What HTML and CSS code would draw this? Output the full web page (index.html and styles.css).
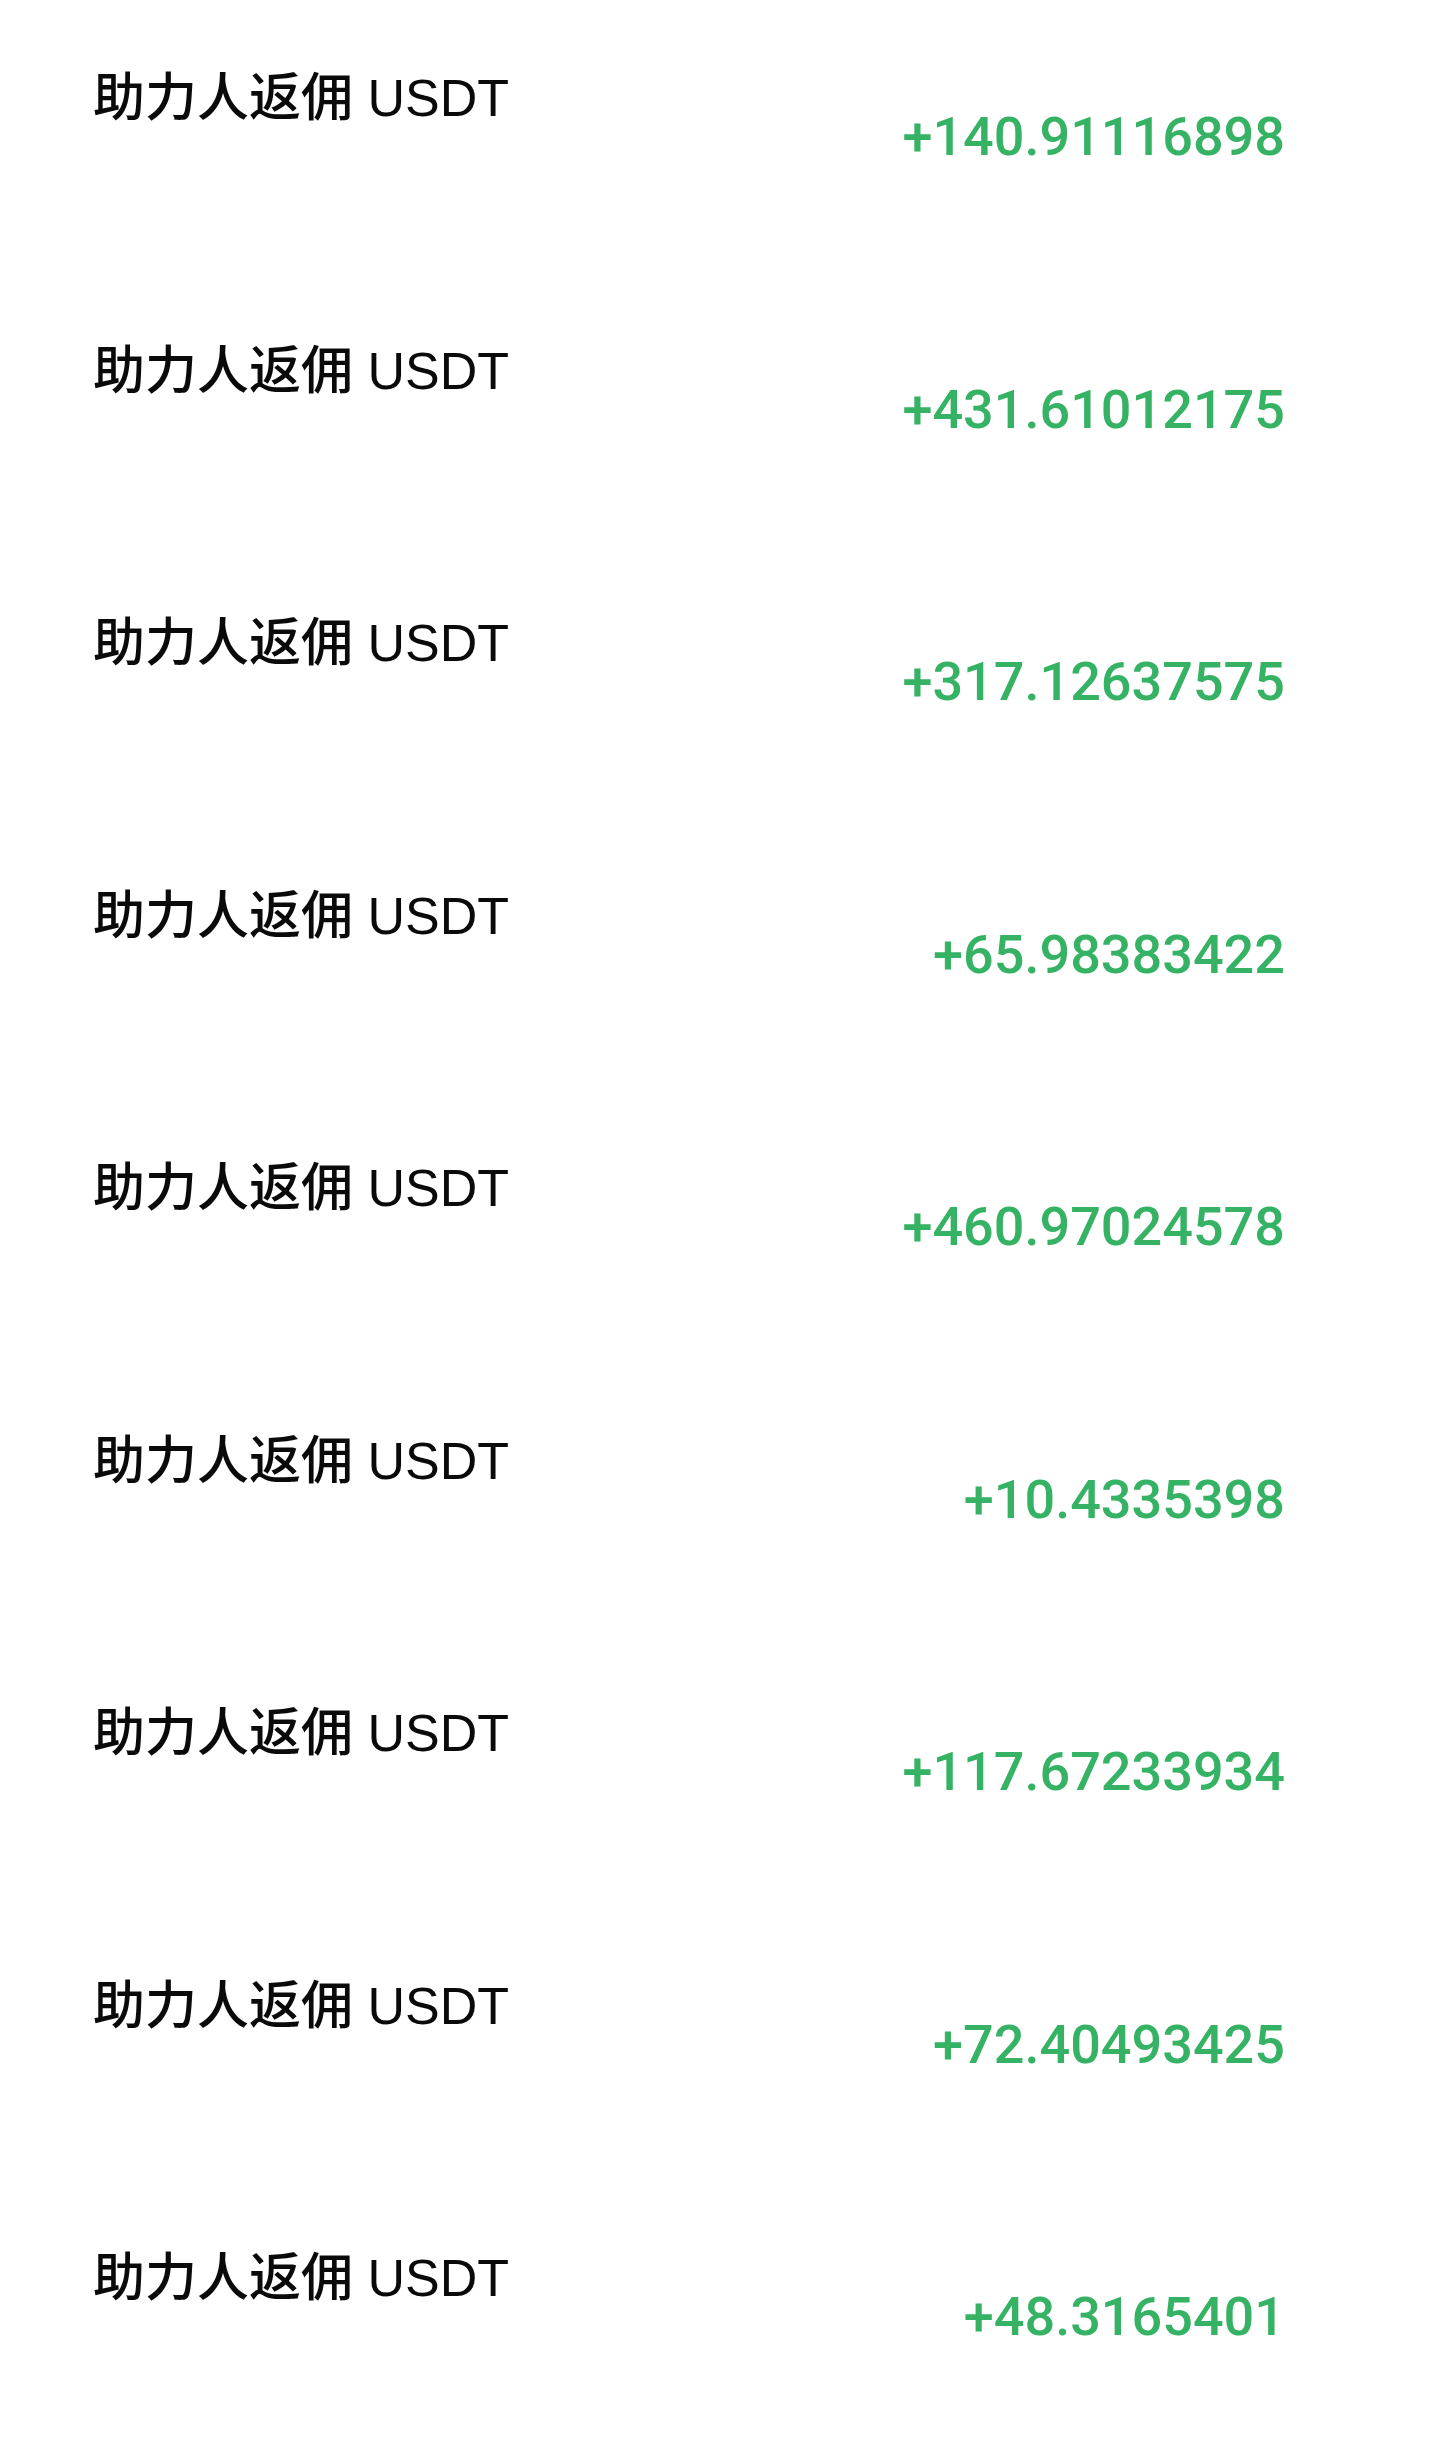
FILE: index.html
```html
<!DOCTYPE html>
<html lang="zh-CN">
<head>
<meta charset="utf-8">
<title>助力人返佣</title>
<link rel="stylesheet" href="styles.css">
</head>
<body>
<div class="list">
  <div class="row"><div class="label">助力人返佣 USDT</div><div class="amount">+140.91116898</div></div>
  <div class="row"><div class="label">助力人返佣 USDT</div><div class="amount">+431.61012175</div></div>
  <div class="row"><div class="label">助力人返佣 USDT</div><div class="amount">+317.12637575</div></div>
  <div class="row"><div class="label">助力人返佣 USDT</div><div class="amount">+65.98383422</div></div>
  <div class="row"><div class="label">助力人返佣 USDT</div><div class="amount">+460.97024578</div></div>
  <div class="row"><div class="label">助力人返佣 USDT</div><div class="amount">+10.4335398</div></div>
  <div class="row"><div class="label">助力人返佣 USDT</div><div class="amount">+117.67233934</div></div>
  <div class="row"><div class="label">助力人返佣 USDT</div><div class="amount">+72.40493425</div></div>
  <div class="row"><div class="label">助力人返佣 USDT</div><div class="amount">+48.3165401</div></div>
</div>
</body>
</html>
```
FILE: styles.css
```css
html, body {
  margin: 0;
  padding: 0;
  background: #ffffff;
}
.list {
  display: flex;
  flex-direction: column;
  padding: 72px 155px 0 93px;
}
.row {
  height: 272.5px;
  display: flex;
  justify-content: space-between;
  align-items: flex-start;
}
.label {
  font-family: "Liberation Sans", "Noto Sans CJK SC", sans-serif;
  font-size: 52px;
  line-height: 1;
  font-weight: 500;
  color: #0a0a0a;
}
.amount {
  margin-top: 38px;
  font-family: Roboto, "Noto Sans", sans-serif;
  font-size: 54px;
  line-height: 1;
  font-weight: 500;
  color: #36b265;
}
```
